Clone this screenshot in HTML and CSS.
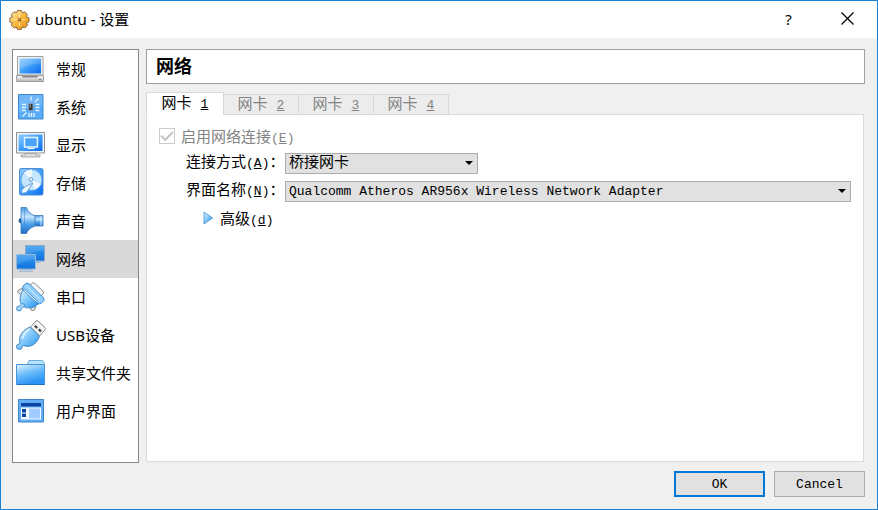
FILE: index.html
```
<!DOCTYPE html>
<html lang="zh-CN">
<head>
    <meta charset="UTF-8">
    <meta name="viewport" content="width=device-width, initial-scale=1.0">
    <title>ubuntu - 设置</title>
    <link rel="stylesheet" href="styles.css">
</head>
<body>
    <svg class="defs" width="0" height="0" aria-hidden="true">
        <defs>
            <linearGradient id="blue" x1="0" y1="0" x2="1" y2="1">
                <stop offset="0" stop-color="#8fcdff"/>
                <stop offset="0.5" stop-color="#3f9dfa"/>
                <stop offset="1" stop-color="#0a6cf0"/>
            </linearGradient>
            <linearGradient id="light" x1="0" y1="0" x2="1" y2="1">
                <stop offset="0" stop-color="#e4f5ff"/>
                <stop offset="0.5" stop-color="#7cc6fb"/>
                <stop offset="1" stop-color="#1e8cee"/>
            </linearGradient>
            <linearGradient id="folder" x1="0" y1="0" x2="0.4" y2="1">
                <stop offset="0" stop-color="#e8f7ff"/>
                <stop offset="0.5" stop-color="#6dbdfb"/>
                <stop offset="1" stop-color="#2a93f4"/>
            </linearGradient>
            <linearGradient id="deep" x1="0" y1="0" x2="0" y2="1">
                <stop offset="0" stop-color="#3aa0f4"/>
                <stop offset="1" stop-color="#0c70dc"/>
            </linearGradient>
            <linearGradient id="cone" x1="0" y1="0" x2="0" y2="1">
                <stop offset="0" stop-color="#4c9be0"/>
                <stop offset="0.35" stop-color="#c4e6ff"/>
                <stop offset="0.65" stop-color="#4a9fea"/>
                <stop offset="1" stop-color="#1d6cc2"/>
            </linearGradient>
            <linearGradient id="metal" x1="0" y1="0" x2="0" y2="1">
                <stop offset="0" stop-color="#fdfdfd"/>
                <stop offset="1" stop-color="#b4b4b4"/>
            </linearGradient>
            <linearGradient id="gold" x1="0" y1="0" x2="1" y2="1">
                <stop offset="0" stop-color="#fff0b8"/>
                <stop offset="0.5" stop-color="#f9b83c"/>
                <stop offset="1" stop-color="#e88a10"/>
            </linearGradient>
        </defs>
    </svg>

    <div class="window">
        <header class="titlebar">
            <svg class="gear" viewBox="0 0 22 22">
                <path d="M8.500 1.500h4l.8 2.300 2.400-1 2.700 2.700-1 2.300 2.600 1v4l-2.500 1 1 2.400-2.800 2.800-2.300-1-1 2.400h-4l-1-2.400-2.400 1-2.700-2.800 1-2.300-2.400-1v-4l2.400-1-1-2.400 2.700-2.700 2.400 1z" fill="url(#gold)" stroke="#8c6a40" stroke-width="1" stroke-linejoin="round"/>
                <path d="M10.500 4.500v4M10.500 13v4M4.500 10.700h4M12.500 10.700h4" stroke="#fde8a8" stroke-width="1"/>
                <circle cx="10.500" cy="10.700" r="1.800" fill="#8c5a20"/>
                <circle cx="10.300" cy="10.200" r=".8" fill="#e8c890"/>
            </svg>
            <h1>ubuntu - 设置</h1>
            <button type="button" class="caption" aria-label="帮助">?</button>
            <button type="button" class="caption close" aria-label="关闭">
                <svg width="13" height="13" viewBox="0 0 13 13"><path d="M.5.5l12 12M12.500.5l-12 12" stroke="#000" stroke-width="1.200"/></svg>
            </button>
        </header>

        <div class="main">
            <nav class="sidebar">
                <a href="#general">
                    <svg viewBox="0 0 32 32">
                        <path d="M2.500 3.500h25.500v18.500h-25.500z" fill="#f2f2f2" stroke="#a0a0a0"/>
                        <path d="M4.500 5.500h21.500v15h-21.500z" fill="url(#blue)"/>
                        <path d="M4.500 5.500h21.500v5q-12 0-21.500 6z" fill="#fff" opacity=".15"/>
                        <path d="M1.500 22.500h27v6h-27z" fill="url(#metal)" stroke="#a0a0a0"/>
                        <path d="M6.500 23h17l-1.500 1.500h-14z" fill="#888"/>
                        <path d="M24 26.500h2" stroke="#777"/>
                    </svg>
                    <span>常规</span>
                </a>
                <a href="#system">
                    <svg viewBox="0 0 32 32">
                        <path d="M3.500 3.500h24.500v24.500h-24.500z" fill="#58abf8" stroke="#3b86cf"/>
                        <path d="M4 4h23.500v10q-14 0-23.500 8z" fill="#fff" opacity=".15"/>
                        <path d="M13.500 12.500h4.500v7h-4.500z" fill="#333" stroke="#7b9cbf"/>
                        <path d="M14.500 13h1.500v4h-1.500z" fill="#777"/>
                        <path d="M16 5.500v4M7 13.500h4M7 16.500h4M7 19.500h4M20.500 13.500h4M20.500 16.500h4M20.500 19.500h4M14 22v4M16.500 22v4M19 22v4M20 11l3.500-3.500M11.500 21.500l-4 4" stroke="#e0f1ff" stroke-width="1.400"/>
                    </svg>
                    <span>系统</span>
                </a>
                <a href="#display">
                    <svg viewBox="0 0 32 32">
                        <path d="M1.500 3.500h28v20.500h-28z" fill="#f4f4f4" stroke="#8d9299"/>
                        <path d="M3.500 5.500h24v16.500h-24z" fill="url(#blue)"/>
                        <path d="M9.500 8.500h13v9.500h-13z" fill="#4ba4f8" stroke="#e8f5ff" stroke-width="1.500"/>
                        <path d="M12.500 19.500h7" stroke="#e8f5ff" stroke-width="1.300"/>
                        <path d="M10 24.500h11v1.500h4v2h-19v-2h4z" fill="#ddd" stroke="#999" stroke-width=".8"/>
                    </svg>
                    <span>显示</span>
                </a>
                <a href="#storage">
                    <svg viewBox="0 0 32 32">
                        <rect x="4.500" y="1.500" width="23.500" height="26.500" rx="1.500" fill="url(#blue)" stroke="#4b8dce"/>
                        <circle cx="16.500" cy="13" r="10.500" fill="#c5e6ff" stroke="#5c9edb" stroke-width=".8"/>
                        <path d="M16.500 13L9 5.500A10.500 10.500 0 0 1 17 2.600zM16.500 13L26 17a10.500 10.500 0 0 1-6 5.500z" fill="#fff" opacity=".75"/>
                        <circle cx="16" cy="12.500" r="1.800" fill="#fff" stroke="#5a97cd" stroke-width="1"/>
                        <path d="M18 16l-6.500 9.500-4.500 1-.5-3.500 4-3.500z" fill="#eef8ff" stroke="#5290c8" stroke-width=".8"/>
                    </svg>
                    <span>存储</span>
                </a>
                <a href="#audio">
                    <svg viewBox="0 0 32 32">
                        <path d="M18.500 10.500h9.500v10.500h-9.500z" fill="url(#cone)" stroke="#3b7dc0" stroke-width=".8"/>
                        <path d="M6 2.500h5.500q1.500 5.500 8.500 8.500v10q-7 2.500-8.500 7.500h-5.500z" fill="url(#cone)" stroke="#3b7dc0" stroke-width=".8"/>
                        <path d="M9.500 3v25" stroke="#3b85cf" opacity=".5"/>
                        <path d="M6 13q-2.500.5-2.500 2.800t2.500 2.700z" fill="#1b5b9e"/>
                        <path d="M26 11v9.500" stroke="#d2ecff"/>
                    </svg>
                    <span>声音</span>
                </a>
                <a href="#network" class="selected">
                    <svg viewBox="0 0 32 32">
                        <path d="M10.500 2.500h19v15.500h-19z" fill="url(#deep)" stroke="#8fa9c4"/>
                        <path d="M11 3h18v4q-10 1-18 6z" fill="#fff" opacity=".12"/>
                        <path d="M20 18.500h5.500v1.500h-5.500z" fill="#9bb8d4"/>
                        <path d="M1.500 11.500h19v14.500h-19z" fill="url(#deep)" stroke="#9bb8d4"/>
                        <path d="M2 12h18v4q-10 1-18 6z" fill="#fff" opacity=".12"/>
                        <path d="M6 26.500h10l1.500 1.800h-13z" fill="#d3e4f4" stroke="#7d9dbd" stroke-width=".7"/>
                    </svg>
                    <span>网络</span>
                </a>
                <a href="#serial">
                    <svg viewBox="0 0 32 32">
                        <path d="M14.500 4.500l3-2.500q1-.5 2 .2l8.500 8q1 1 .3 2l-2.300 3.300z" fill="#f4f4f4" stroke="#888"/>
                        <path d="M2 10.500l4-3 3 2.500-3.500 3.500zM15 26l3-2.500 3 2.500-2 3.500h-2.500z" fill="#e6e6e6" stroke="#888"/>
                        <path d="M8 9l15 14q-3 3.500-7 4-5 .5-8.500-2-3-3-2.500-8 .5-4 3-8z" fill="url(#light)" stroke="#4b8ec8"/>
                        <path d="M8 5l3.500-3 3 1 12 12 2 1.500.5 3-3 3-3 .5-1-3-12-11.500-2.500-.5z" fill="#8fcffb" stroke="#3582c4" stroke-width=".9" stroke-linejoin="round"/>
                        <path d="M11 4.500l13.500 13.500" stroke="#d8f0ff"/>
                        <path d="M7.500 22l-3 3q-3 0-3 2.500t2.500 2.500 2.500-2.500l3.500-3z" fill="#9ed6fc" stroke="#2f7cc0" stroke-width=".8"/>
                    </svg>
                    <span>串口</span>
                </a>
                <a href="#usb">
                    <svg viewBox="0 0 32 32">
                        <path d="M21 2q1-1 2 0l7 6.500q1 1 0 2.200l-5.500 6.300-9-9z" fill="#f4f4f4" stroke="#888"/>
                        <path d="M20.500 6l2.500 2.200-1.500 1.600-2.500-2.200zM24.500 9.500l2.300 2-1.500 1.700-2.300-2z" fill="#444"/>
                        <path d="M15 8l9.500 9q-2.500 8-9 10-4 1-7-.5l-1.500 1.500q0 2.500-2.500 2.500-3 0-3-3 0-2 2.500-2.500l1-1.500q-1-3 0-6 2.500-6.500 10-9.500z" fill="url(#light)" stroke="#4b86be"/>
                        <path d="M14.500 10q-5.500 3.500-7 9.500" fill="none" stroke="#fff" stroke-width="2" opacity=".6"/>
                    </svg>
                    <span>USB设备</span>
                </a>
                <a href="#shared">
                    <svg viewBox="0 0 32 32">
                        <path d="M11.500 9.500l2.500-6h13.500l1.500 2v8h-17.500z" fill="#b9e2fc" stroke="#6aacdc"/>
                        <path d="M1.500 7.500h28v20h-28z" fill="url(#folder)" stroke="#4595d8"/>
                        <path d="M2 27.500h27.500" stroke="#1d72c0"/>
                    </svg>
                    <span>共享文件夹</span>
                </a>
                <a href="#ui">
                    <svg viewBox="0 0 32 32">
                        <path d="M3.500 4.500h25v22.500h-25z" fill="#62aef7" stroke="#3d83c6"/>
                        <path d="M6 8h20v3.500h-20z" fill="#0b47a2"/>
                        <path d="M6 12.500h20v12h-20z" fill="#f2f8ff"/>
                        <path d="M14 13.500h11v10h-11z" fill="#a0ccff"/>
                        <path d="M7 14h4v3.500h-4zM7 18.500h4v3.500h-4z" fill="#0b47a2"/>
                    </svg>
                    <span>用户界面</span>
                </a>
            </nav>

            <div class="content">
                <h2>网络</h2>
                <div class="tabs" role="tablist">
                    <button type="button" role="tab" class="tab active" aria-selected="true">网卡 <span class="latin"><u>1</u></span></button>
                    <button type="button" role="tab" class="tab" disabled>网卡 <span class="latin"><u>2</u></span></button>
                    <button type="button" role="tab" class="tab" disabled>网卡 <span class="latin"><u>3</u></span></button>
                    <button type="button" role="tab" class="tab" disabled>网卡 <span class="latin"><u>4</u></span></button>
                </div>
                <form class="pane" id="adapter-form">
                    <div class="enable">
                        <input type="checkbox" id="enabled" checked disabled>
                        <label for="enabled">启用网络连接<span class="latin">(<u>E</u>)</span></label>
                    </div>
                    <div class="fields">
                        <label for="attached">连接方式<span class="latin">(<u>A</u>)</span>：</label>
                        <div class="select short">
                            <select id="attached">
                                <option>桥接网卡</option>
                            </select>
                        </div>
                        <label for="name">界面名称<span class="latin">(<u>N</u>)</span>：</label>
                        <div class="select">
                            <select id="name" class="latin">
                                <option>Qualcomm Atheros AR956x Wireless Network Adapter</option>
                            </select>
                        </div>
                    </div>
                    <button type="button" class="advanced">
                        <svg width="10" height="14" viewBox="0 0 10 14"><path d="M1 1l8.500 6-8.500 6z" fill="url(#light)" stroke="#3c8fd0" stroke-width=".8"/></svg>
                        <span>高级<span class="latin">(<u>d</u>)</span></span>
                    </button>
                </form>
            </div>
        </div>

        <footer class="buttons">
            <button type="submit" form="adapter-form" class="default">OK</button>
            <button type="button">Cancel</button>
        </footer>
    </div>
</body>
</html>
```
FILE: styles.css
```
* {
    box-sizing: border-box;
}
body {
    margin: 0;
    font-family: "Noto Sans", "Noto Sans CJK SC", sans-serif;
    font-size: 15px;
    color: #000;
}
button, select {
    font: inherit;
    color: inherit;
}
.defs {
    position: absolute;
}
.window {
    display: flex;
    flex-direction: column;
    min-height: 100vh;
    border: 1px solid #1a80d4;
    background-color: #f0f0f0;
}

/* title bar */
.titlebar {
    display: flex;
    align-items: center;
    height: 37px;
    padding-left: 8px;
    background-color: #fff;
}
.gear {
    width: 22px;
    height: 22px;
    margin-right: 4px;
}
h1 {
    flex: 1;
    margin: 0;
    padding-bottom: 2px;
    font-size: 15px;
    font-weight: normal;
}
.caption {
    width: 57px;
    height: 36px;
    padding: 0 0 2px;
    border: none;
    background: none;
}
.close svg {
    display: block;
    margin: 0 auto;
}
.close {
    width: 60px;
}

.main {
    display: flex;
    flex: 1;
    gap: 7px;
    padding: 11px 12px 0 11px;
}

/* category list */
.sidebar {
    width: 127px;
    flex-shrink: 0;
    border: 1px solid #828790;
    background-color: #fff;
}
.sidebar a {
    display: flex;
    align-items: center;
    gap: 9px;
    height: 38px;
    padding-left: 2px;
    color: #000;
    text-decoration: none;
    white-space: nowrap;
}
.sidebar a.selected {
    background-color: #d9d9d9;
}
.sidebar svg {
    width: 32px;
    height: 32px;
    flex-shrink: 0;
}
.sidebar span {
    padding-bottom: 2px;
}

/* page */
.content {
    display: flex;
    flex-direction: column;
    flex: 1;
    min-width: 0;
}
h2 {
    height: 35px;
    margin: 0 0 8px;
    padding-left: 9px;
    border: 1px solid #a0a0a0;
    background-color: #fff;
    font-size: 18px;
    line-height: 32px;
}
.tabs, .pane, .buttons {
    font-family: "Liberation Mono", "Noto Sans CJK SC", monospace;
}
.latin {
    font-family: "Liberation Mono", monospace;
    font-size: 13px;
}
.tabs {
    display: flex;
    position: relative;
    z-index: 1;
    align-items: flex-end;
    height: 23px;
    margin-bottom: -1px;
}
.tab {
    width: 76px;
    height: 21px;
    margin-right: -1px;
    padding: 2px 0 0;
    border: 1px solid #d9d9d9;
    background-color: #ececec;
    color: #838383;
    line-height: 18px;
}
.tab.active {
    width: 78px;
    height: 23px;
    border-bottom-color: #fff;
    background-color: #fff;
    color: #000;
}
.pane {
    flex: 1;
    margin: 0 1px 1px 0;
    padding: 10px 12px;
    border: 1px solid #dcdcdc;
    background-color: #fff;
}
.enable {
    display: flex;
    align-items: center;
    gap: 6px;
    height: 22px;
    color: #838383;
}
.enable input {
    display: grid;
    place-items: center;
    appearance: none;
    width: 16px;
    height: 16px;
    margin: 0;
    border: 1px solid #ccc;
    background-color: #fff;
}
.enable input:checked::before {
    content: "";
    width: 10px;
    height: 5px;
    margin-bottom: 3px;
    border: solid #c4c4c4;
    border-width: 0 0 2px 2px;
    transform: rotate(-45deg);
}
.fields {
    display: grid;
    grid-template-columns: 126px 1fr;
    grid-auto-rows: 21px;
    row-gap: 7px;
    align-items: center;
    margin-top: 6px;
}
.fields label {
    padding-left: 27px;
    line-height: 23px;
    white-space: nowrap;
}
.select {
    position: relative;
}
.select.short {
    width: 193px;
}
.select::after {
    content: "";
    position: absolute;
    top: 8px;
    right: 5px;
    border: 4px solid transparent;
    border-top: 4px solid #000;
    border-bottom: none;
    pointer-events: none;
}
.select select {
    display: block;
    appearance: none;
    width: 100%;
    height: 21px;
    padding: 1px 20px 0 3px;
    border: 1px solid #adadad;
    border-radius: 0;
    background-color: #e1e1e1;
    line-height: 18px;
}
.select select.latin {
    font-family: "Liberation Mono", monospace;
    font-size: 13px;
}
.advanced {
    display: flex;
    align-items: center;
    gap: 7px;
    height: 22px;
    margin: 5px 0 0 44px;
    padding: 0;
    border: none;
    background: none;
}

.buttons {
    display: flex;
    justify-content: flex-end;
    gap: 9px;
    padding: 8px 12px 12px;
}
.buttons button {
    width: 91px;
    height: 26px;
    padding: 0;
    border: 1px solid #adadad;
    background-color: #e1e1e1;
    font-size: 13px;
}
.buttons .default {
    border: 2px solid #0078d7;
}
```
